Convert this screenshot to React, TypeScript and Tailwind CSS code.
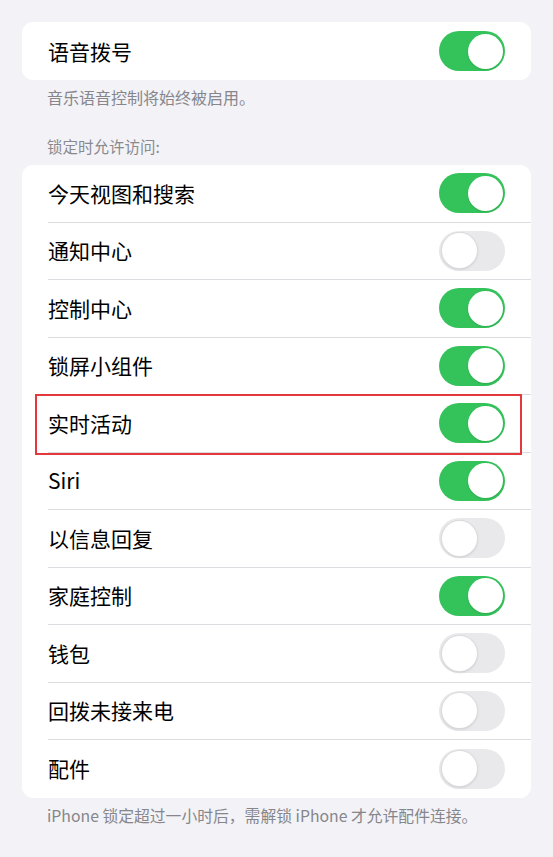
import React from "react";

type Row = { label: string; on: boolean; highlight?: boolean };

const rows: Row[] = [
  { label: "今天视图和搜索", on: true },
  { label: "通知中心", on: false },
  { label: "控制中心", on: true },
  { label: "锁屏小组件", on: true },
  { label: "实时活动", on: true, highlight: true },
  { label: "Siri", on: true },
  { label: "以信息回复", on: false },
  { label: "家庭控制", on: true },
  { label: "钱包", on: false },
  { label: "回拨未接来电", on: false },
  { label: "配件", on: false },
];

function Toggle({ on }: { on: boolean }) {
  return (
    <div
      className={`flex h-[40px] w-[66px] shrink-0 items-center rounded-full p-[2.5px] ${
        on ? "justify-end bg-[#34c35a]" : "justify-start bg-[#e9e9eb]"
      }`}
    >
      <div
        className={`h-[35px] w-[35px] rounded-full bg-white ${
          on ? "shadow-[0_1px_2px_rgba(0,0,0,0.12)]" : "shadow-[0_1px_3px_rgba(0,0,0,0.18)] ring-1 ring-[#dcdcdf]"
        }`}
      />
    </div>
  );
}

export default function App() {
  return (
    <div
      className="min-h-[857px] w-[553px] bg-[#f2f2f7] px-[22px] pt-[22px] text-black"
      style={{ fontFamily: '"Noto Sans CJK SC", "Noto Sans", sans-serif' }}
    >
      <div className="rounded-[11px] bg-white">
        <div className="flex h-[58px] items-center justify-between pl-[26px] pr-[26px]">
          <span className="text-[21px] leading-none">语音拨号</span>
          <Toggle on={true} />
        </div>
      </div>
      <p className="mt-[7px] pl-[25px] text-[16px] leading-[20px] text-[#86868b]">
        音乐语音控制将始终被启用。
      </p>
      <p className="mt-[29px] pl-[25px] text-[15.5px] leading-[20px] text-[#8a8a8e]">
        锁定时允许访问:
      </p>
      <div className="mt-[9px] rounded-[11px] bg-white">
        {rows.map((r, i) => (
          <div key={r.label} className="relative pl-[26px]">
            <div
              className={`flex h-[57.5px] items-center justify-between pr-[26px] ${
                i < rows.length - 1 ? "border-b border-[#dcdce0]" : ""
              }`}
            >
              <span className="text-[21px] leading-none">{r.label}</span>
              <Toggle on={r.on} />
            </div>
            {r.highlight && (
              <div className="pointer-events-none absolute -top-[1px] left-[13px] right-[9px] -bottom-[2px] border-2 border-[#e5383d]" />
            )}
          </div>
        ))}
      </div>
      <p className="mt-[8px] pl-[25px] text-[15.8px] leading-[20px] text-[#86868b]">
        iPhone 锁定超过一小时后，需解锁 iPhone 才允许配件连接。
      </p>
    </div>
  );
}
